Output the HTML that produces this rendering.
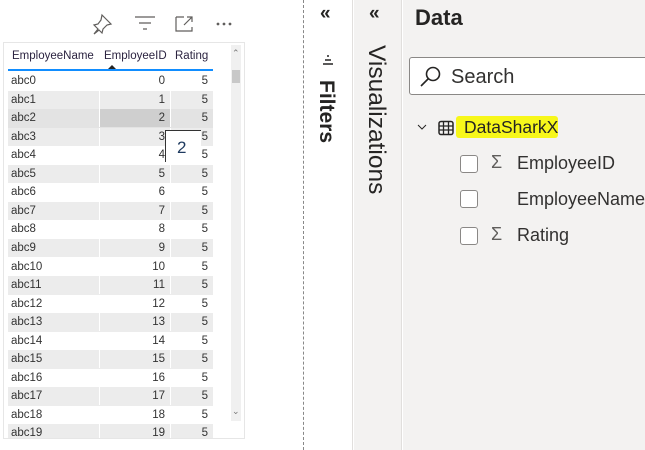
<!DOCTYPE html>
<html><head><meta charset="utf-8">
<style>
*{margin:0;padding:0;box-sizing:border-box}
body{width:645px;height:450px;overflow:hidden;background:#fff;font-family:"Liberation Sans",sans-serif;position:relative;color:#252423}
.abs{position:absolute}
.visual{left:3px;top:42px;width:242px;height:397px;border:1px solid #e6e6e6;background:#fff}
.hdr{left:8px;top:45px;height:26px;width:205px;border-bottom:2px solid #118dff;font-size:11.5px;color:#2b2340}
.hdr span{position:absolute;top:5px}
.row{left:8px;width:205px;height:18.5px;font-size:11.5px;color:#333}
.row div{position:absolute;top:0;height:18px;line-height:18px}
.c1{left:0;width:91px;padding-left:3px}
.c2{left:91px;width:71px;text-align:right;padding-right:5px;border-left:1px solid #fff}
.c3{left:162px;width:43px;text-align:right;padding-right:5px;border-left:1px solid #fff}
.g{background:#ececec}
.rot{transform-origin:0 0;transform:rotate(90deg);white-space:nowrap}
.cb{left:460px;width:18px;height:18px;border:1px solid #8a8886;border-radius:3px;background:#fff}
.fld{font-size:18px;color:#323130;left:517px}
.sig{font-size:18px;color:#605e5c;left:491px}
</style></head><body>
<svg class="abs" style="left:90px;top:12px" width="150" height="24" viewBox="0 0 150 24" fill="none" stroke="#605e5c" stroke-width="1.2">
<path d="M12 3 L21 12 L17 13 L13 17 L12 21 L9 18 L4 22 L8 17 L4 13 L8 12 L11 8 Z"/>
<path d="M45 5 H65 M49 11 H61 M53 17 H57"/>
<path d="M86 5 H94 M94 19 H102 V15 M86 5 V19 H94 M94 13 L102 5 M97 5 H102 V10"/>
<circle cx="128" cy="12" r="0.8" fill="#605e5c"/><circle cx="134" cy="12" r="0.8" fill="#605e5c"/><circle cx="140" cy="12" r="0.8" fill="#605e5c"/>
</svg>
<div class="abs visual"></div>
<div class="abs hdr"><span style="left:4px">EmployeeName</span><span style="left:96px">EmployeeID</span><span style="left:167px">Rating</span>
<div class="abs" style="left:100px;top:20px;width:0;height:0;border-left:4px solid transparent;border-right:4px solid transparent;border-bottom:4px solid #252423"></div></div>
<div class="abs" style="left:231px;top:45px;width:10px;height:376px;background:#f0f0f0"></div>
<div class="abs" style="left:232px;top:70px;width:8px;height:13px;background:#c8c8c8"></div>
<div class="abs" style="left:232px;top:48px;font-size:9px;color:#777">&#8963;</div>
<div class="abs" style="left:232px;top:406px;font-size:9px;color:#777">&#8964;</div>
<div class="abs" style="left:8px;top:72px;width:205px;height:366px;overflow:hidden">
<div id="rows"></div>
</div>
<script>
var h='';for(var i=0;i<20;i++){var cls=i%2?'g':'';var c2=i==2?' style="background:#cfcfcf"':'';h+='<div class="abs row '+cls+'" style="left:0;top:'+(i*18.55)+'px'+(i==2?';background:#e3e3e3':'')+'"><div class="c1">abc'+i+'</div><div class="c2"'+c2+'>'+i+'</div><div class="c3">5</div></div>';}
document.getElementById('rows').innerHTML=h;
</script>
<div class="abs" style="left:165px;top:130px;width:36px;height:32px;background:#fff;border-top:1px solid #333;border-left:1px solid #333;font-size:17px;color:#1e3a5f;padding:7px 0 0 11px">2</div>
<div class="abs" style="left:303px;top:0;width:0;height:450px;border-left:1px dashed #888"></div>
<div class="abs" style="left:305px;top:0;width:48px;height:450px;background:#fff;border-right:1px solid #e1dfdd"></div>
<div class="abs" style="left:320px;top:3px;font-size:19px;font-weight:bold;color:#252423">&laquo;</div>
<svg class="abs" style="left:322px;top:55px" width="12" height="10" viewBox="0 0 12 10" fill="none" stroke="#252423" stroke-width="1.5"><path d="M5 1 H7 M3 5 H9 M1 9 H11"/></svg>
<div class="abs rot" style="left:338px;top:80px;font-size:21px;font-weight:bold;color:#252423">Filters</div>
<div class="abs" style="left:354px;top:0;width:48px;height:450px;background:#f3f2f1;border-right:1px solid #e1dfdd"></div>
<div class="abs" style="left:369px;top:3px;font-size:19px;font-weight:bold;color:#252423">&laquo;</div>
<div class="abs rot" style="left:390px;top:45px;font-size:24.5px;color:#252423">Visualizations</div>
<div class="abs" style="left:403px;top:0;width:242px;height:450px;background:#f3f2f1"></div>
<div class="abs" style="left:415px;top:5px;font-size:22px;font-weight:bold;color:#252423">Data</div>
<div class="abs" style="left:409px;top:57px;width:240px;height:38px;background:#fff;border:1px solid #8a8886;border-radius:3px"></div>
<svg class="abs" style="left:418px;top:64px" width="26" height="26" viewBox="0 0 26 26" fill="none" stroke="#252423" stroke-width="1.6"><circle cx="15" cy="10" r="6.5"/><path d="M10.5 14.5 L3 22"/></svg>
<div class="abs" style="left:451px;top:66px;font-size:20px;color:#323130">Search</div>
<svg class="abs" style="left:415px;top:120px" width="45" height="16" viewBox="0 0 45 16" fill="none" stroke="#252423"><path d="M3 5 L7 9 L11 5" stroke-width="1"/><rect x="24" y="1.5" width="14" height="13" rx="2" stroke-width="1.5"/><path d="M24 6 H38 M24 10 H38 M28.5 1.5 V14.5 M33.5 1.5 V14.5" stroke-width="1.3"/></svg>
<div class="abs" style="left:456px;top:116px;width:102px;height:22px;background:#f7f71a;border-radius:3px"></div>
<div class="abs" style="left:464px;top:117px;font-size:17.5px;color:#252423">DataSharkX</div>
<div class="abs cb" style="top:155px"></div><div class="abs sig" style="top:152px">&Sigma;</div><div class="abs fld" style="top:153px">EmployeeID</div>
<div class="abs cb" style="top:190px"></div><div class="abs fld" style="top:189px">EmployeeName</div>
<div class="abs cb" style="top:227px"></div><div class="abs sig" style="top:224px">&Sigma;</div><div class="abs fld" style="top:225px">Rating</div>
</body></html>
